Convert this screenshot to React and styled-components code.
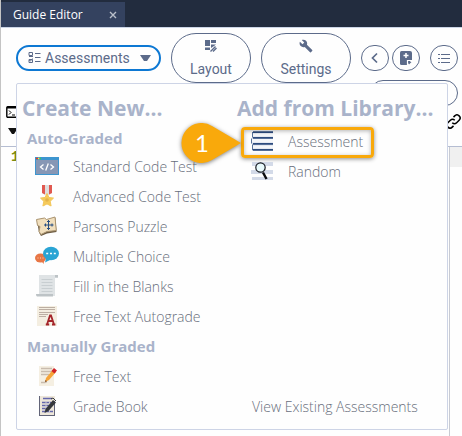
import React from "react";
import styled, { createGlobalStyle } from "styled-components";

const slate = "#5c6b8a";

const GlobalStyle = createGlobalStyle`
  * { box-sizing: border-box; }
  body { margin: 0; background: #fff; font-family: "Open Sans", sans-serif; overflow: hidden; }
  button { font: inherit; color: inherit; background: none; border: 0; padding: 0; margin: 0; cursor: pointer; }
  svg { display: block; flex: none; }
`;

const Page = styled.div`
  position: relative;
  min-height: 100vh;
  border-left: 1px solid #c4c4c4;
  display: flex;
  flex-direction: column;
  background: #fefefe;
`;

const TabBar = styled.header`
  display: flex;
  height: 28px;
  padding-top: 2px;
  background: #222c3e;
  border-bottom: 1px solid #ccd5e6;
`;

const Tab = styled.div`
  display: flex;
  align-items: center;
  justify-content: space-between;
  width: 124px;
  padding: 0 8px 0 12px;
  background: #34425f;
  color: #fff;
  font-size: 12px;
`;

const CloseButton = styled.button`
  color: #b9bfca;
`;

const Toolbar = styled.nav`
  display: flex;
  align-items: center;
  gap: 10px;
  padding: 5px 4px 0 15px;
  color: ${slate};
`;

const SelectButton = styled.button`
  display: flex;
  align-items: center;
  gap: 4px;
  width: 145px;
  height: 26px;
  padding: 0 8px 0 10px;
  border: 2px solid #0d78d3;
  border-radius: 13px;
  font-family: Roboto, sans-serif;
  font-size: 14px;
  svg:last-child { margin-left: auto; }
`;

const ToolButton = styled.button`
  display: flex;
  flex-direction: column;
  align-items: center;
  gap: 6px;
  flex: none;
  width: ${(p) => p.$width}px;
  height: 50px;
  padding-top: 5px;
  border: 1px solid ${slate};
  border-radius: 25px;
  font-family: Roboto, sans-serif;
  font-size: 14px;
  line-height: 20px;
`;

const RoundGroup = styled.div`
  display: flex;
  gap: 3px;
`;

const RoundButton = styled.button`
  display: flex;
  align-items: center;
  justify-content: center;
  flex: none;
  width: 28px;
  height: 26px;
  border: 1px solid ${slate};
  border-radius: 13px;
`;

const WrappedButton = styled.button`
  align-self: flex-end;
  width: 88px;
  height: 26px;
  margin: -3px 4px 0 0;
  border: 1px solid ${slate};
  border-radius: 13px;
`;

const EditorTools = styled.div`
  display: flex;
  justify-content: space-between;
  height: 40px;
  padding: 0 1px 0 5px;
`;

const ToolStack = styled.div`
  display: flex;
  flex-direction: column;
  gap: 10px;
  padding-top: ${(p) => p.$top || 0}px;
`;

const Editor = styled.main`
  flex: 1;
  display: flex;
  justify-content: space-between;
  border-top: 1px solid #b5bdd2;
`;

const LineNumber = styled.span`
  padding: 0 0 0 10px;
  font: bold 14px/20px "Liberation Mono", monospace;
  color: #7c8a10;
`;

const SidePane = styled.div`
  width: 13px;
  border-left: 1px solid #c8cbd3;
  &::before { content: ""; display: block; height: 20px; background: #f0f0f0; }
`;

const Menu = styled.section`
  position: absolute;
  top: 83px;
  left: 15px;
  right: 14px;
  display: grid;
  grid-template-columns: 215px 1fr;
  padding: 7px 0 8px 5px;
  background: #fefefe;
  border: 1px solid #cdd4e6;
  border-radius: 2px;
`;

const Column = styled.div`
  display: flex;
  flex-direction: column;
  white-space: nowrap;
`;

const Title = styled.h2`
  margin: 0;
  font-size: 21px;
  line-height: 35px;
  font-weight: 700;
  color: #a9b3ca;
`;

const GroupTitle = styled.h3`
  margin: 0;
  padding-left: 5px;
  font-size: 15px;
  line-height: ${(p) => p.$height}px;
  font-weight: 700;
  color: #a9b3ca;
`;

const MenuItem = styled.button`
  position: relative;
  display: flex;
  align-items: center;
  gap: 14px;
  height: 30px;
  padding-left: 13px;
  font-size: 14px;
  font-weight: 300;
  color: #686e7c;
`;

const LibraryItems = styled.div`
  display: flex;
  flex-direction: column;
`;

const FooterItem = styled(MenuItem)`
  margin-top: auto;
  padding-left: 15px;
`;

const Highlight = styled.span`
  position: absolute;
  top: 1px;
  left: 4px;
  width: 133px;
  height: 31px;
  border: 3px solid #f9a90b;
  border-radius: 4px;
  box-shadow: 0 1px 4px rgba(0, 0, 0, 0.45), inset 0 1px 4px rgba(0, 0, 0, 0.3);
`;

const Callout = styled.span`
  position: absolute;
  top: -8px;
  left: -64px;
  width: 74px;
  height: 50px;
  color: #fff;
  font: 24px/50px Lato, sans-serif;
  svg { position: absolute; inset: 0; }
`;

const CalloutNumber = styled.span`
  position: absolute;
  left: 0;
  width: 58px;
  text-align: center;
`;

const ItemIcon = ({ children }) => (
  <svg width="24" height="24" viewBox="0 0 24 24" aria-hidden="true">{children}</svg>
);

const icons = {
  code: (
    <>
      <rect x="0" y="3" width="24" height="18" fill="#3d95cf" />
      <rect x="1" y="6" width="22" height="14" fill="#8797b5" />
      <path d="M1 4.500h2" stroke="#e53b2f" strokeWidth="1.500" />
      <path d="M3 4.500h1.500" stroke="#ffe33b" strokeWidth="1.500" />
      <path d="M4.500 4.500H6" stroke="#34d058" strokeWidth="1.500" />
      <path d="M8.500 10.500 5.500 13l3 2.500M15.500 10.500l3 2.500-3 2.500M13.300 9.500l-2.600 7" fill="none" stroke="#fff" strokeWidth="1.300" />
    </>
  ),
  medal: (
    <>
      <path d="M7 1h10v8l-5 3-5-3z" fill="#dedede" />
      <path d="M7 1h3v9.500L7 9zM14 1h3v8l-3 1.500z" fill="#e15950" />
      <path d="m12 9.500 2 4 4.500.6-3.300 3.200.9 4.700-4.100-2.100L7.900 22l.9-4.700-3.300-3.200 4.500-.6z" fill="#f5ca5a" stroke="#f3c75a" />
      <circle cx="12" cy="16" r="1.800" fill="#e3b24a" />
    </>
  ),
  puzzle: (
    <>
      <path d="M2 6.500 10 5l2 1.500L20.500 4l1 14-9.500 1.500L6 22l-2-3.500z" fill="#6b5a41" />
      <path d="m1.500 5.500 8-1.500 2 1.500L20 3l1.300 13.500-9.300 1L6 20.500l-2-3 1-5-2.500-1z" fill="#f1dfbd" stroke="#aa9470" />
      <path d="M13.500 6v10M9 11h9.500" stroke="#264e82" />
      <path d="M12 7.500h3M12 14.500h3M10.500 9.500v3M17 9.500v3" stroke="#264e82" />
    </>
  ),
  chat: (
    <>
      <ellipse cx="5.500" cy="14" rx="5.500" ry="4.500" fill="#e87645" />
      <path d="m6 17 3 3-.5-4z" fill="#e87645" />
      <ellipse cx="16" cy="9.500" rx="8" ry="6.700" fill="#2aa4d4" />
      <path d="M11 14.500 10 18.500l6-3z" fill="#2aa4d4" />
      <path d="M11.200 9.500h2M15 9.500h2M18.800 9.500h2" stroke="#fff" strokeWidth="1.700" />
      <path d="M2.500 14h1M5 14h1M7.500 14h1" stroke="#ffd4bf" strokeWidth="1" />
    </>
  ),
  scroll: (
    <>
      <path d="M4 1h17l2 1v2h-3v18H4z" fill="#dfe3e5" />
      <path d="M1 20h17v2.500H2q-1-.5-1-2.500" fill="#bdc3c6" />
      <path d="M20 1h3v2.500h-3z" fill="#bdc3c6" />
      <path d="M6.500 5.500h11M6.500 8.500h11M6.500 11.500h11M6.500 14.500h11M6.500 17.500h11" stroke="#c8ced1" />
    </>
  ),
  autograde: (
    <>
      <rect x="2" y="2" width="20" height="20" fill="#f4eee1" />
      <path d="M4 3.500h16M4 5.500h16M4 8.500h16M4 10.500h9M4 12.500h7" stroke="#bcaea3" />
      <path d="m12 20.500 3-9h1l3 9M13.500 17h5M10.800 20.500h3.400M17 20.500h3.400" fill="none" stroke="#a4242a" strokeWidth="1.800" />
    </>
  ),
  freeText: (
    <>
      <rect x="4" y="2" width="15" height="20" fill="#f5efe2" />
      <path d="M6 4.500h11M6 7.500h11M6 10.500h8M6 18.500h4l2-1" fill="none" stroke="#c9bcae" strokeWidth="1.400" />
      <path d="m10 18 1-4 7-8.500 3 2.500-7 8z" fill="#f6a338" />
      <path d="m16.500 7 2.500-3 3 2.500-2.500 3z" fill="#cf2229" />
      <path d="m10 18 .5-2 1.500 1.200z" fill="#704427" />
    </>
  ),
  gradeBook: (
    <>
      <rect x="4" y="2" width="16" height="20" fill="#eee7da" />
      <path d="M4.500 2v20M4 21.500h16M19.500 7v15" stroke="#626478" />
      <path d="M8 4.500h9M7 8.500h9M7 11.500h7M7 14.500h5M7 17.500h11" stroke="#6567ac" strokeWidth="1.300" />
      <path d="M11 7v12M14.500 7v12" stroke="#d0cbd0" />
      <path d="m9.500 19 1-4L18 6l3 2.500-7.500 8.500z" fill="#35373b" />
      <path d="m16 5 2-1 3 3" fill="none" stroke="#35373b" />
    </>
  ),
  assessment: (
    <>
      <path d="M2 3h21v19H2z" fill="#d5dbe6" />
      <path d="M3 4.500h20v3H3zM2 10h21v3.500H2zM3 16.500h20v3H3z" fill="#f4f6f9" />
      <path d="M3 3.200h20M3 8.800h20M3 14.800h20M3 20.800h20" stroke="#2c4b7e" strokeWidth="1.800" />
      <path d="M2.500 3v5.500M1.500 9.500v5M2.500 15.500V21" stroke="#56719a" />
    </>
  ),
  random: (
    <>
      <path d="M2 3h21v4H2zM1 11h22v4H1zM2 18h21v3H2z" fill="#d3dae8" />
      <circle cx="10.500" cy="8.500" r="4.700" fill="#e9fafc" stroke="#171b22" strokeWidth="1.200" />
      <path d="m13 13.500 3.500 6.500" stroke="#080a0d" strokeWidth="2.400" />
    </>
  ),
};

const autoGraded = [
  ["code", "Standard Code Test"],
  ["medal", "Advanced Code Test"],
  ["puzzle", "Parsons Puzzle"],
  ["chat", "Multiple Choice"],
  ["scroll", "Fill in the Blanks"],
  ["autograde", "Free Text Autograde"],
];

const manuallyGraded = [
  ["freeText", "Free Text"],
  ["gradeBook", "Grade Book"],
];

const Items = ({ items }) =>
  items.map(([icon, label]) => (
    <MenuItem key={icon}>
      <ItemIcon>{icons[icon]}</ItemIcon>
      {label}
    </MenuItem>
  ));

export default function App() {
  return (
    <Page>
      <GlobalStyle />
      <TabBar>
        <Tab>
          Guide Editor
          <CloseButton aria-label="Close tab">
            <svg width="8" height="8" viewBox="0 0 8 8"><path d="m1 1 6 6M7 1 1 7" stroke="currentColor" strokeWidth="1.400" /></svg>
          </CloseButton>
        </Tab>
      </TabBar>
      <Toolbar>
        <SelectButton aria-expanded="true">
          <svg width="13" height="12" viewBox="0 0 13 12" fill="none" stroke="currentColor">
            <path d="M1 .5h3.500v3H1zM1 7.500h3.500v3H1zM1 4.500h4M4.500 6.500 2.500 9 1 8M7 1.500h5.500M7 5.500h5.500M7 9.500h5.500" />
          </svg>
          Assessments
          <svg width="11" height="8" viewBox="0 0 11 8"><path d="M0 1h11L7 7H4z" fill="currentColor" /></svg>
        </SelectButton>
        <ToolButton $width={80}>
          <svg width="14" height="14" viewBox="0 0 14 14" fill="currentColor">
            <path d="M1 1h5v6H1zM7 1h5v3H7zM1 8.500h5V11H1zM7 5.500h5L10 7 7 9z" />
            <path d="m6.500 12.500 5-5M9 12.500l3.500-3.500" stroke="currentColor" strokeWidth="1.400" />
          </svg>
          Layout
        </ToolButton>
        <ToolButton $width={90}>
          <svg width="14" height="14" viewBox="0 0 24 24" fill="currentColor">
            <path d="m22.700 19-9.100-9.100c.9-2.300.4-5-1.500-6.900-2-2-5-2.400-7.400-1.300L9 6 6 9 1.600 4.700C.4 7.100.9 10.100 2.900 12.100c1.900 1.900 4.600 2.400 6.900 1.500l9.100 9.100c.4.4 1 .4 1.400 0l2.300-2.300c.5-.4.5-1.100.1-1.400z" />
          </svg>
          Settings
        </ToolButton>
        <RoundGroup>
          <RoundButton aria-label="Back">
            <svg width="12" height="12" viewBox="0 0 12 12"><path d="M8 1.500 3.500 6 8 10.500" fill="none" stroke="currentColor" strokeWidth="1.700" /></svg>
          </RoundButton>
          <RoundButton aria-label="Add page">
            <svg width="14" height="14" viewBox="0 0 14 14">
              <path d="M2.500 0H11q2 0 2 2v6.500L8.500 14H2.500Q1 14 1 12.500v-11Q1 0 2.500 0" fill="currentColor" />
              <path d="M7 2v5M4.500 4.500h5" stroke="#fff" strokeWidth="1.500" />
              <path d="M8.500 14V9.500H13" fill="none" stroke="#fff" strokeWidth="1.200" />
              <path d="M10 13.500V11h2.500z" fill="currentColor" />
            </svg>
          </RoundButton>
        </RoundGroup>
        <RoundButton aria-label="Page list">
          <svg width="12" height="10" viewBox="0 0 12 10"><path d="M0 1.500h2M3 1.500h9M0 5.500h2M3 5.500h9M0 9.500h2M3 9.500h9" stroke="currentColor" /></svg>
        </RoundButton>
      </Toolbar>
      <WrappedButton aria-label="More tools" />
      <EditorTools>
        <ToolStack>
          <svg width="12" height="12" viewBox="0 0 12 12">
            <rect x=".8" y=".8" width="11" height="10.400" rx="1" fill="none" stroke="#000" strokeWidth="1.400" />
            <path d="M1 1.500h10" stroke="#000" strokeWidth="2" />
            <path d="m3 4.500 2 2-2 2M6 9h3" fill="none" stroke="#000" />
          </svg>
          <svg width="12" height="8" viewBox="0 0 12 8"><path d="M2 0h10L8 6H6z" fill="#111" /></svg>
        </ToolStack>
        <ToolStack $top={8}>
          <svg width="15" height="15" viewBox="0 0 24 24" fill="none" stroke="#000" strokeWidth="2.400">
            <path d="M10 14a5 5 0 0 0 7 0l4-4a4.900 4.900 0 0 0-7-7l-2 2M14 10a5 5 0 0 0-7 0l-4 4a4.900 4.900 0 0 0 7 7l2-2" />
          </svg>
        </ToolStack>
      </EditorTools>
      <Editor>
        <LineNumber>1</LineNumber>
        <SidePane />
      </Editor>
      <Menu aria-label="Assessments">
        <Column>
          <Title>Create New...</Title>
          <GroupTitle $height={25}>Auto-Graded</GroupTitle>
          <Items items={autoGraded} />
          <GroupTitle $height={30}>Manually Graded</GroupTitle>
          <Items items={manuallyGraded} />
        </Column>
        <Column>
          <Title>Add from Library...</Title>
          <LibraryItems>
            <MenuItem>
              <ItemIcon>{icons.assessment}</ItemIcon>
              Assessment
              <Highlight />
              <Callout>
                <svg width="74" height="50" viewBox="0 0 74 50">
                  <path d="M68 25 39 42A20 20 0 1 1 39 8Z" fill="#f9a90b" filter="drop-shadow(0 1px 2px rgba(0,0,0,.5))" />
                </svg>
                <CalloutNumber>1</CalloutNumber>
              </Callout>
            </MenuItem>
            <MenuItem>
              <ItemIcon>{icons.random}</ItemIcon>
              Random
            </MenuItem>
          </LibraryItems>
          <FooterItem>View Existing Assessments</FooterItem>
        </Column>
      </Menu>
    </Page>
  );
}
